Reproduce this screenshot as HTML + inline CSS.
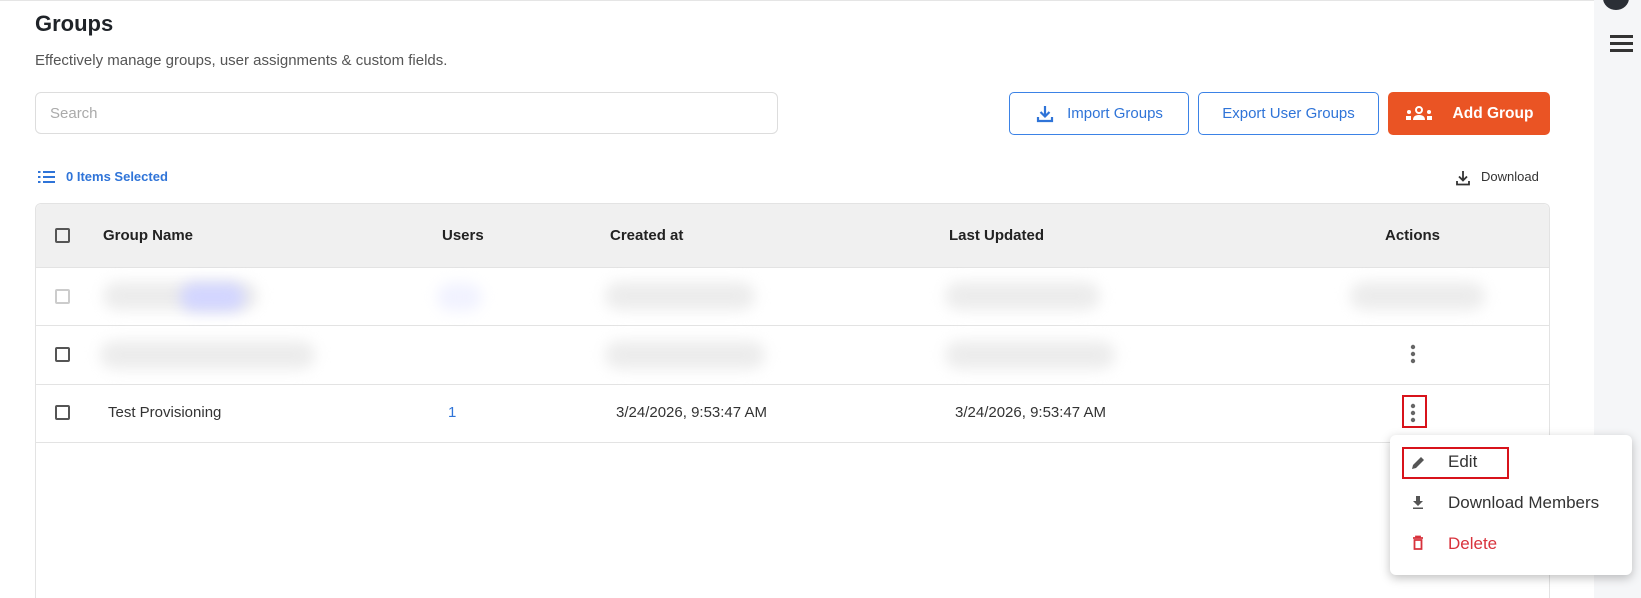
<!DOCTYPE html>
<html><head><meta charset="utf-8"><style>
*{box-sizing:border-box;margin:0;padding:0}
html,body{width:1641px;height:598px;overflow:hidden}
body{background:#fff;font-family:"Liberation Sans",sans-serif;position:relative;color:#222}
.a{position:absolute}
.btn{position:absolute;top:92px;height:43px;border:1px solid #3b82e6;border-radius:5px;color:#2f74d8;font-size:15px;display:flex;align-items:center;justify-content:center}
.cb{position:absolute;left:55px;width:15px;height:15px;border:2px solid #555;border-radius:2px}
.th{position:absolute;top:227px;font-size:15px;font-weight:bold;color:#222}
.hl{position:absolute;left:35px;width:1515px;height:1px;background:#e3e3e3}
.td{position:absolute;top:404px;font-size:15px;color:#333}
.blur{position:absolute;height:28px;border-radius:15px;background:#ececec;filter:blur(7px)}
.mi{position:absolute;left:1448px;font-size:17px;color:#333}
</style></head><body>
<div class="a" style="left:0;top:0;width:1594px;height:1px;background:#e5e5e5"></div>
<div class="a" style="left:1594px;top:0;width:47px;height:598px;background:#f5f6f8"></div>
<div class="a" style="left:1603px;top:-14px;width:26px;height:24px;border-radius:50%;background:#2b2f36"></div>
<div class="a" style="left:1610px;top:35px;width:23px;height:3px;background:#333;box-shadow:0 7px 0 #333,0 14px 0 #333"></div>

<div class="a" style="left:35px;top:11px;font-size:22px;font-weight:bold;color:#1f2328">Groups</div>
<div class="a" style="left:35px;top:52px;font-size:15px;color:#555">Effectively manage groups, user assignments &amp; custom fields.</div>
<div class="a" style="left:35px;top:92px;width:743px;height:42px;border:1px solid #ddd;border-radius:6px;padding:12px 14px;font-size:15px;color:#aaa">Search</div>

<div class="btn" style="left:1009px;width:180px"><svg width="20" height="20" viewBox="0 0 20 20" style="margin-right:12px"><path d="M10 2v10M5.5 8l4.5 4.5L14.5 8M3 13v4h14v-4" fill="none" stroke="#2f74d8" stroke-width="2.2"/></svg>Import Groups</div>
<div class="btn" style="left:1198px;width:181px">Export User Groups</div>
<div class="btn" style="left:1388px;width:162px;background:#ea5424;border-color:#ea5424;color:#fff;font-weight:bold;font-size:15.5px"><svg width="28" height="16" viewBox="0 0 28 16" style="margin-right:20px"><circle cx="14" cy="4" r="3" fill="none" stroke="#fff" stroke-width="2"/><path d="M8 14c0-4 3-5 6-5s6 1 6 5z" fill="#fff"/><circle cx="4" cy="6" r="2" fill="#fff"/><circle cx="24" cy="6" r="2" fill="#fff"/><rect x="1" y="10" width="5" height="4" fill="#fff"/><rect x="22" y="10" width="5" height="4" fill="#fff"/></svg>Add Group</div>

<svg class="a" style="left:38px;top:170px" width="17" height="14" viewBox="0 0 17 14"><g fill="#2f74d8"><rect x="0" y="1" width="2.5" height="2"/><rect x="0" y="6" width="2.5" height="2"/><rect x="0" y="11" width="2.5" height="2"/><rect x="5" y="1" width="12" height="2"/><rect x="5" y="6" width="12" height="2"/><rect x="5" y="11" width="12" height="2"/></g></svg>
<div class="a" style="left:66px;top:169px;font-size:13px;font-weight:bold;color:#2f74d8">0 Items Selected</div>
<svg class="a" style="left:1455px;top:170px" width="16" height="16" viewBox="0 0 16 16"><path d="M8 1v9M4 6.5l4 4 4-4M2 11v3.5h12V11" fill="none" stroke="#333" stroke-width="1.8"/></svg>
<div class="a" style="left:1481px;top:169px;font-size:13px;color:#333">Download</div>

<div class="a" style="left:35px;top:203px;width:1515px;height:395px;border:1px solid #e3e3e3;border-bottom:none;border-radius:6px 6px 0 0"></div>
<div class="a" style="left:36px;top:204px;width:1513px;height:63px;background:#f0f0f0;border-radius:6px 6px 0 0"></div>
<div class="cb" style="top:228px"></div>
<div class="th" style="left:103px">Group Name</div>
<div class="th" style="left:442px">Users</div>
<div class="th" style="left:610px">Created at</div>
<div class="th" style="left:949px">Last Updated</div>
<div class="th" style="left:1385px">Actions</div>
<div class="hl" style="top:267px"></div>
<div class="hl" style="top:325px"></div>
<div class="hl" style="top:384px"></div>
<div class="hl" style="top:442px"></div>

<div class="cb" style="top:289px;border-color:#ccc"></div>
<div class="blur" style="left:103px;top:282px;width:155px"></div>
<div class="blur" style="left:180px;top:283px;width:65px;background:#d2d5ff"></div>
<div class="blur" style="left:437px;top:283px;width:45px;background:#f1f2ff"></div>
<div class="blur" style="left:605px;top:282px;width:150px"></div>
<div class="blur" style="left:945px;top:282px;width:155px"></div>
<div class="blur" style="left:1350px;top:282px;width:135px"></div>

<div class="cb" style="top:347px"></div>
<div class="blur" style="left:100px;top:341px;width:215px"></div>
<div class="blur" style="left:605px;top:341px;width:160px"></div>
<div class="blur" style="left:945px;top:341px;width:170px"></div>
<svg class="a" style="left:1409px;top:344px" width="8" height="20"><circle cx="4" cy="3" r="2.2" fill="#666"/><circle cx="4" cy="10" r="2.2" fill="#666"/><circle cx="4" cy="17" r="2.2" fill="#666"/></svg>

<div class="cb" style="top:405px"></div>
<div class="td" style="left:108px">Test Provisioning</div>
<div class="td" style="left:448px;color:#2f74d8">1</div>
<div class="td" style="left:616px">3/24/2026, 9:53:47 AM</div>
<div class="td" style="left:955px">3/24/2026, 9:53:47 AM</div>
<svg class="a" style="left:1409px;top:403px" width="8" height="20"><circle cx="4" cy="3" r="2.2" fill="#666"/><circle cx="4" cy="10" r="2.2" fill="#666"/><circle cx="4" cy="17" r="2.2" fill="#666"/></svg>
<div class="a" style="left:1402px;top:395px;width:25px;height:33px;border:2px solid #d8131b"></div>

<div class="a" style="left:1390px;top:435px;width:242px;height:140px;background:#fff;border-radius:6px;box-shadow:0 3px 10px rgba(0,0,0,.25)"></div>
<div class="a" style="left:1402px;top:447px;width:107px;height:32px;border:2px solid #d8131b"></div>
<svg class="a" style="left:1410px;top:455px" width="16" height="16" viewBox="0 0 16 16"><path d="M2 14l1-4 8-8 3 3-8 8z" fill="#555"/></svg>
<div class="mi" style="top:452px">Edit</div>
<svg class="a" style="left:1410px;top:494px" width="16" height="16" viewBox="0 0 16 16"><path d="M6 2h4v5h3l-5 5-5-5h3z M3 13.5h10v1.5H3z" fill="#555"/></svg>
<div class="mi" style="top:493px">Download Members</div>
<svg class="a" style="left:1410px;top:535px" width="16" height="16" viewBox="0 0 16 16"><path d="M3 3h10M6 3V1.5h4V3M4.5 5h7v9h-7z" fill="none" stroke="#d8323c" stroke-width="1.8"/></svg>
<div class="mi" style="top:534px;color:#d8323c">Delete</div>
</body></html>
